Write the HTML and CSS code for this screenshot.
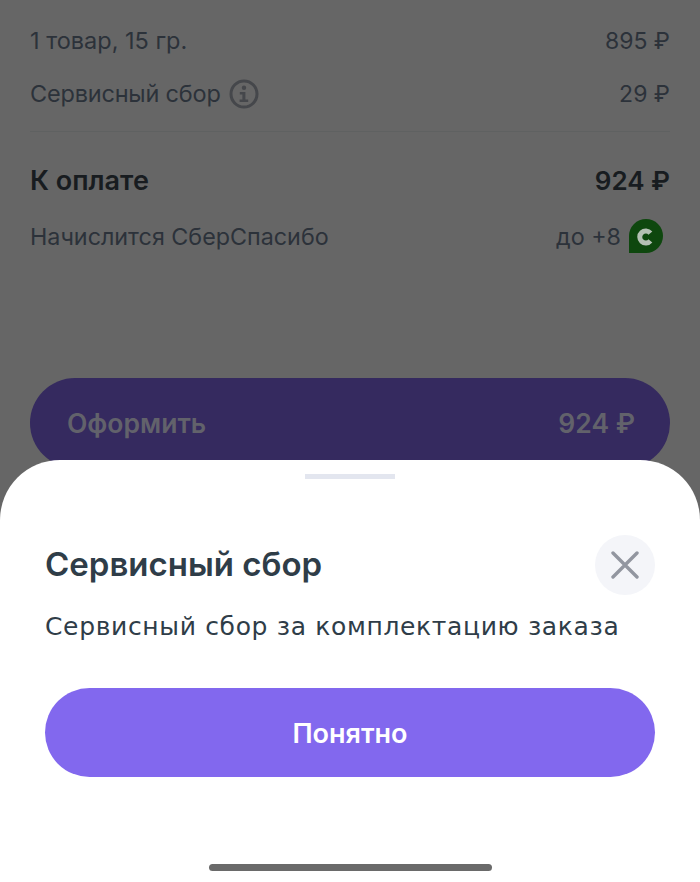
FILE: index.html
```html
<!DOCTYPE html>
<html lang="ru">
<head>
    <meta charset="UTF-8">
    <title>Сервисный сбор</title>
    <link rel="stylesheet" href="styles.css">
</head>
<body>
<div class="screen">
    <div class="summary">
        <div class="row">
            <span>1 товар, 15 гр.</span>
            <span class="amount">895 ₽</span>
        </div>
        <div class="row">
            <span class="withIcon tight">Сервисный сбор
                <svg class="infoIcon" viewBox="0 0 30 30" width="30" height="30">
                    <circle cx="15" cy="15" r="13" fill="none" stroke="#45474b" stroke-width="3"/>
                    <circle cx="15" cy="8.8" r="2.2" fill="#45474b"/>
                    <path d="M10.8 13h5.6v7.4h2.8v2.6H10.6v-2.6h2.8v-4.8h-2.6z" fill="#45474b"/>
                </svg>
            </span>
            <span class="amount">29 ₽</span>
        </div>
        <div class="divider"></div>
        <div class="row total">
            <span>К оплате</span>
            <span>924 ₽</span>
        </div>
        <div class="row bonus">
            <span>Начислится СберСпасибо</span>
            <span class="withIcon">до +8
                <svg class="bonusIcon" viewBox="0 0 34 34" width="34" height="34">
                    <path d="M17 0a17 17 0 0 1 0 34H0V17A17 17 0 0 1 17 0z" fill="#0e470e"/>
                    <path d="M21.4 14.2a6 6 0 1 0 0 7.6" fill="none" stroke="#b4c0b4" stroke-width="5"/>
                </svg>
            </span>
        </div>
    </div>
    <div class="checkout">
        <span>Оформить</span>
        <span>924 ₽</span>
    </div>

    <div class="sheet">
        <div class="grabber"></div>
        <div class="sheetHead">
            <h2>Сервисный сбор</h2>
            <div class="closeBtn">
                <svg viewBox="0 0 28 28" width="28" height="28">
                    <path d="M2 2l24 24M26 2L2 26" stroke="#9296a0" stroke-width="3.4" stroke-linecap="round"/>
                </svg>
            </div>
        </div>
        <p class="sheetText">Сервисный сбор за комплектацию заказа</p>
        <div class="okBtn">Понятно</div>
        <div class="homeBar"></div>
    </div>
</div>
</body>
</html>
```

FILE: styles.css
```css
* {
    box-sizing: border-box;
}

body {
    margin: 0;
    font-family: Inter, "Noto Sans", sans-serif;
}

.screen {
    position: relative;
    width: 700px;
    height: 882px;
    overflow: hidden;
    background: #666666;
    color: #2c323a;
}

.summary {
    padding: 14px 30px 0;
}

.row {
    display: flex;
    justify-content: space-between;
    align-items: center;
    height: 53px;
    font-size: 23.5px;
}

.amount {
    font-size: 23px;
}

.withIcon {
    display: flex;
    align-items: center;
    gap: 8px;
}

.tight {
    letter-spacing: -0.2px;
}

.divider {
    height: 1px;
    margin-top: 11px;
    background: #5f6161;
}

.total {
    margin-top: 20px;
    height: 56px;
    font-size: 27px;
    font-weight: 600;
    color: #181c20;
}

.total span:last-child {
    font-size: 26px;
}

.bonus {
    height: 56px;
    font-size: 23.3px;
}

.bonusIcon {
    margin-right: 7px;
}

.checkout {
    display: flex;
    justify-content: space-between;
    align-items: center;
    height: 90px;
    margin: 114px 30px 0;
    padding: 0 35px 0 37px;
    border-radius: 45px;
    background: #352a5f;
    color: #62626b;
    font-size: 26.5px;
    font-weight: 600;
}

/* bottom sheet lies over the page */
.sheet {
    position: absolute;
    left: 0;
    right: 0;
    top: 460px;
    bottom: 0;
    padding: 14px 45px 0;
    border-radius: 60px 60px 0 0;
    background: #ffffff;
}

.grabber {
    width: 90px;
    height: 5px;
    margin: 0 auto;
    background: #e3e6ef;
}

.sheetHead {
    display: flex;
    justify-content: space-between;
    align-items: center;
    margin-top: 56px;
}

.sheetHead h2 {
    margin: 0 0 2px;
    font-size: 33px;
    font-weight: 600;
    color: #2f3d48;
}

.closeBtn {
    display: flex;
    align-items: center;
    justify-content: center;
    width: 60px;
    height: 60px;
    border-radius: 50%;
    background: #f4f5f9;
}

.sheetText {
    margin: 12px 0 0;
    font-family: "DejaVu Sans", sans-serif;
    font-size: 25px;
    letter-spacing: 0.65px;
    line-height: 40px;
    white-space: nowrap;
    color: #2f3d48;
}

.okBtn {
    display: flex;
    align-items: center;
    justify-content: center;
    height: 89px;
    margin-top: 41px;
    padding-top: 2px;
    border-radius: 45px;
    background: #8268ee;
    color: #ffffff;
    font-size: 27px;
    font-weight: 600;
}

.homeBar {
    width: 283px;
    height: 7px;
    margin: 87px auto 0;
    border-radius: 4px;
    background: #6a6a6a;
}
```
